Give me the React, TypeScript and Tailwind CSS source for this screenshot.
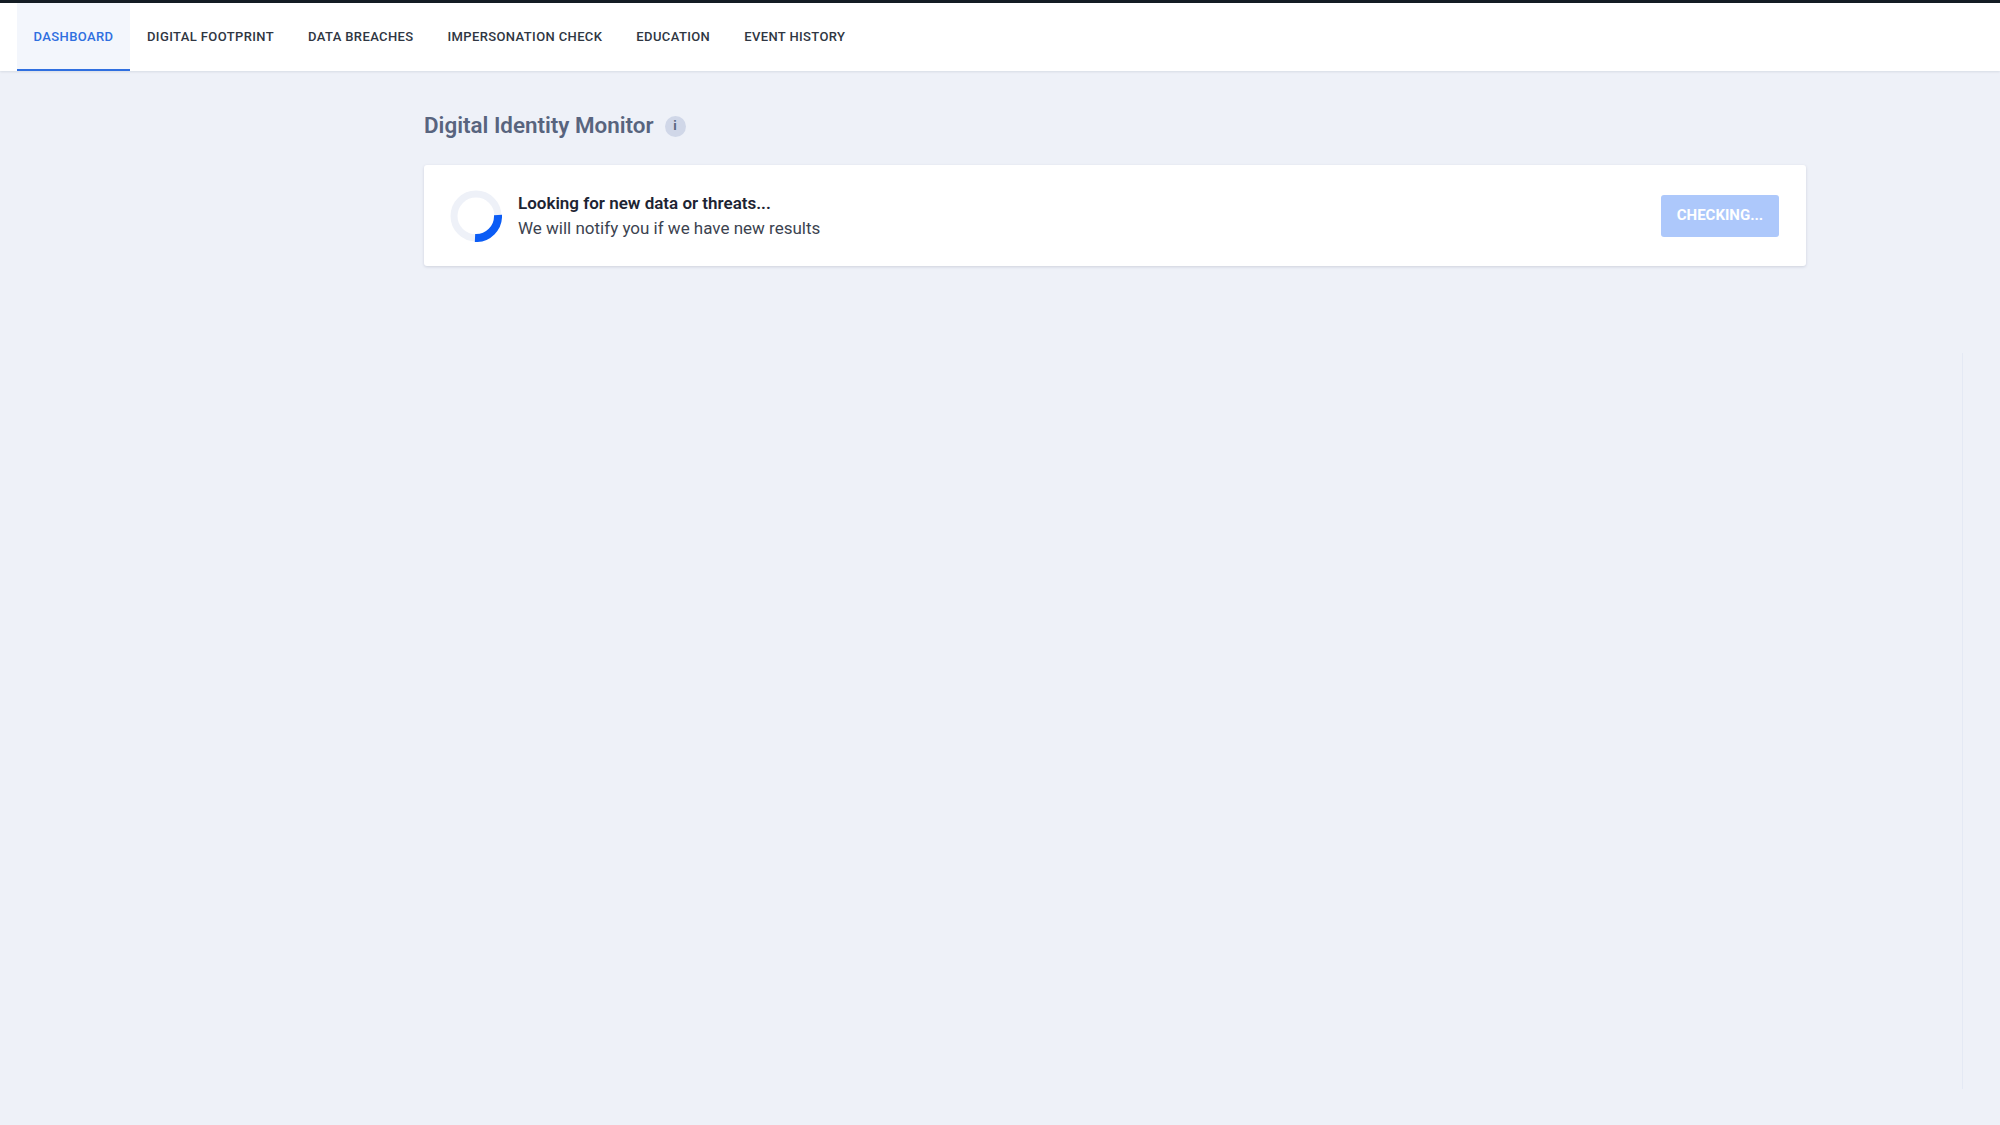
export default function App() {
  const tabs = ["DIGITAL FOOTPRINT", "DATA BREACHES", "IMPERSONATION CHECK", "EDUCATION", "EVENT HISTORY"];
  return (
    <div className="relative min-h-[1125px] bg-[#eef1f8] font-['Roboto',sans-serif]">
      <div className="h-[3px] bg-[#141c24]" />
      <nav className="flex h-[68px] bg-white pl-[17px] shadow-[0_1px_2px_rgba(60,70,100,0.12)]">
        <div className="flex w-[113px] items-center justify-center border-b-2 border-[#2f6fe0] bg-[#f3f6fc] pt-[2px] text-[13px] font-medium tracking-[0.38px] text-[#2f6fe0]">
          DASHBOARD
        </div>
        <div className="flex items-center gap-[34px] pl-[17px] text-[13px] font-medium tracking-[0.38px] text-[#2f3642]">
          {tabs.map((t) => (
            <span key={t}>{t}</span>
          ))}
        </div>
      </nav>
      <main className="pl-[424px] pr-[194px] pt-[28px]">
        <div className="flex h-[54px] items-center gap-[11px]">
          <h1 className="text-[22.4px] font-semibold text-[#58647e]">Digital Identity Monitor</h1>
          <span className="flex h-[21px] w-[21px] items-center justify-center rounded-full bg-[#d0d7e8] text-[13px] font-bold text-[#58647e]">
            i
          </span>
        </div>
        <section className="mt-[12px] flex h-[101px] items-center rounded-[3px] bg-white pl-[26px] pr-[27px] shadow-[0_1px_3px_rgba(60,70,100,0.18)]">
          <svg width="52" height="52" viewBox="0 0 52 52" className="shrink-0">
            <circle cx="26" cy="26" r="22" fill="none" stroke="#eef1f8" strokeWidth="7" />
            <path d="M48 25A22 22 0 0 1 25 48" fill="none" stroke="#0b5cf5" strokeWidth="8" />
          </svg>
          <div className="ml-[16px] flex-1">
            <p className="text-[17px] font-semibold leading-[25px] text-[#1d2433]">Looking for new data or threats...</p>
            <p className="text-[17px] leading-[25px] text-[#3c4350]">We will notify you if we have new results</p>
          </div>
          <button className="h-[42px] w-[118px] rounded-[3px] bg-[#adc8fb] text-[15px] font-bold text-white">
            CHECKING...
          </button>
        </section>
      </main>
      <div className="absolute left-[1962px] top-[353px] h-[736px] w-px bg-[#e4e9f4]" />
    </div>
  );
}
